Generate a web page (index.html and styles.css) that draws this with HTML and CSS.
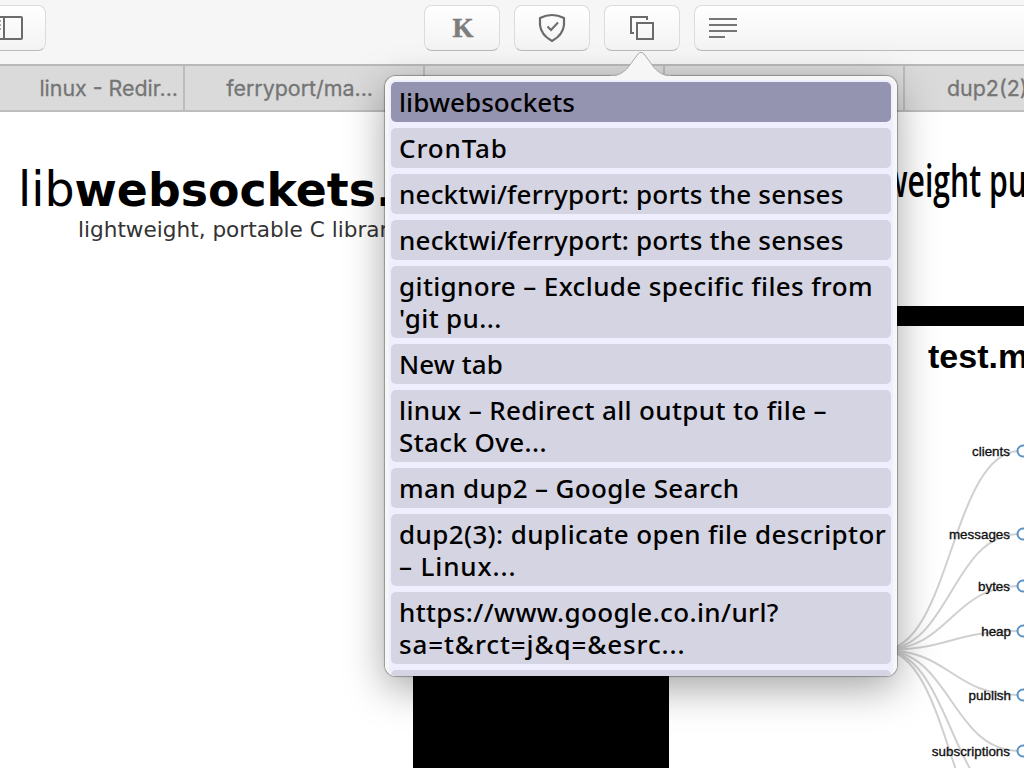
FILE: index.html
```
<!DOCTYPE html>
<html lang="en">
<head>
<meta charset="utf-8">
<title>libwebsockets</title>
<link rel="stylesheet" href="styles.css">
</head>
<body>
<div class="window">
  <header class="toolbar">
    <div class="button sidebar-button">
      <svg width="23" height="24" viewBox="0 0 23 24" fill="none" stroke="#6b6b6b" stroke-width="2"><path d="M-4 1H21Q22 1 22 2V22Q22 23 21 23H-4M4 1V23"/><path d="M0 5h1M0 9h1M0 13h1" stroke="#aaa"/></svg>
    </div>
    <div class="button k-button">K</div>
    <div class="button">
      <svg width="28" height="30" viewBox="0 0 28 30" fill="none" stroke="#6b6b6b" stroke-width="2.2"><path d="M14 2Q20 2 26 5V12Q25 22 14 28Q3 22 2 12V5Q8 2 14 2Z" stroke-linejoin="round"/><path d="M9.5 13.5L13 17L20 9.5" stroke-width="2"/></svg>
    </div>
    <div class="button">
      <svg width="24" height="24" viewBox="0 0 24 24" fill="none" stroke="#6b6b6b" stroke-width="2"><path d="M4 17H1V1H17V4"/><rect x="7" y="7" width="16" height="16"/></svg>
    </div>
    <div class="address">
      <svg width="28" height="20" viewBox="0 0 28 20" stroke="#757575" stroke-width="2"><path d="M0 1H28M0 7H28M0 13H28M0 19H16"/></svg>
    </div>
  </header>
  <nav class="tabs">
    <div class="tab tab-first">linux - Redir...</div>
    <div class="tab tab-second">ferryport/ma...</div>
    <div class="tab"></div>
    <div class="tab"></div>
    <div class="tab tab-last">dup2(2)</div>
  </nav>
  <main class="page">
    <section class="brand">
      <h1 class="logo"><span class="logo-light">lib</span><span class="logo-bold">websockets.</span></h1>
      <p class="tagline">lightweight, portable C library</p>
    </section>
    <div class="middle"><div class="video"></div></div>
    <section class="right">
      <h2 class="headline"><span>weight pu</span></h2>
      <div class="rule"></div>
      <h3 class="server">test.mosquitto</h3>
      <svg class="tree" width="144" height="383" viewBox="880 385 144 383">
        <g fill="none" stroke="#d0d0d0" stroke-width="2">
          <path d="M882 650C951 650 951 451 1020 451"/>
          <path d="M882 650C951 650 951 534 1020 534"/>
          <path d="M882 650C951 650 951 586 1020 586"/>
          <path d="M882 650C951 650 951 631 1020 631"/>
          <path d="M882 650C951 650 951 695 1020 695"/>
          <path d="M882 650C951 650 951 751 1020 751"/>
          <path d="M882 650C951 650 951 808 1020 808"/>
          <path d="M882 650C951 650 951 860 1020 860"/>
        </g>
        <g fill="#fff" stroke="#5b93c5" stroke-width="2">
          <circle cx="1023" cy="451" r="5.5"/><circle cx="1023" cy="534" r="5.5"/><circle cx="1023" cy="586" r="5.5"/><circle cx="1023" cy="631" r="5.5"/><circle cx="1023" cy="695" r="5.5"/><circle cx="1023" cy="751" r="5.5"/>
        </g>
        <g class="labels" text-anchor="end">
          <text x="1010" y="455.5">clients</text>
          <text x="1010" y="538.5">messages</text>
          <text x="1010" y="590.5">bytes</text>
          <text x="1011" y="636">heap</text>
          <text x="1011" y="700">publish</text>
          <text x="1010" y="756">subscriptions</text>
        </g>
      </svg>
    </section>
  </main>
  <div class="popover">
    <svg class="arrow" width="60" height="28" viewBox="0 0 60 28"><path d="M0 25C8 25 12 22 17 16.500L27 3Q30 -.2 33 3L43 16.500C48 22 52 25 60 25V28H0Z" fill="#f6f6f6"/><path d="M0 24.500C8 24.500 12 22 17 16.500L27 3Q30 -.5 33 3L43 16.500C48 22 52 24.500 60 24.500" fill="none" stroke="#aaa"/></svg>
    <div class="frame">
      <ul class="list">
        <li class="item selected tight">libwebsockets</li>
        <li class="item loose">CronTab</li>
        <li class="item snug">necktwi/ferryport: ports the senses</li>
        <li class="item snug">necktwi/ferryport: ports the senses</li>
        <li class="item">gitignore – Exclude specific files from<br>'git pu...</li>
        <li class="item tight">New tab</li>
        <li class="item">linux – Redirect all output to file –<br>Stack Ove...</li>
        <li class="item">man dup2 – Google Search</li>
        <li class="item">dup2(3): duplicate open file descriptor<br><span class="loose">– Linux...</span></li>
        <li class="item">https://www.google.co.in/url?<br><span class="loose">sa=t&amp;rct=j&amp;q=&amp;esrc...</span></li>
        <li class="item"></li>
      </ul>
    </div>
  </div>
</div>
</body>
</html>
```
FILE: styles.css
```
* { box-sizing: border-box; }
body { margin: 0; background: #fff; }
h1, h2, h3, p, ul { margin: 0; padding: 0; font-weight: normal; }
.window { position: relative; width: 1024px; height: 768px; overflow: hidden; display: flex; flex-direction: column; background: #fff; }

.toolbar { height: 64px; flex: none; display: flex; gap: 14px; padding-top: 5px; background: #f6f6f6; }
.button, .address { height: 46px; border: 1px solid #dcdcdc; border-bottom: 1.5px solid #bbb; border-radius: 8px; background: linear-gradient(#fff, #f3f3f3); display: flex; align-items: center; justify-content: center; }
.button { width: 76px; flex: none; }
.sidebar-button { width: 46px; margin-right: 364px; border-left: 0; border-radius: 0 8px 8px 0; justify-content: flex-start; }
.k-button { padding-left: 2px; font: bold 28px/44px "Liberation Serif", serif; color: #7d7d7d; -webkit-text-stroke: .5px #7d7d7d; }
.k-button { font-size: 27px; }
.address { flex: 1; border-right: 0; border-radius: 8px 0 0 8px; justify-content: flex-start; padding-left: 14px; }

.tabs { height: 48px; flex: none; display: flex; border-top: 2px solid #b9b9b9; border-bottom: 2px solid #bdbdbd; background: #dadada; font: 21.4px/44px Inter, sans-serif; color: #757575; -webkit-text-stroke: .3px #757575; overflow: hidden; white-space: nowrap; }
.tab { width: 240px; flex: none; border-right: 2px solid #bcbcbc; text-align: right; }
.tab-first { width: 185px; padding-right: 5px; }
.tab-second { padding-right: 50px; }
.tab-last { text-align: left; padding-left: 42px; border-right: 0; }

.page { flex: 1; min-height: 0; display: flex; overflow: hidden; }
.brand { width: 413px; flex: none; overflow: hidden; white-space: nowrap; padding: 50px 0 0 18px; }
.logo { display: flex; height: 56px; align-items: baseline; font: 47.5px/56px "DejaVu Sans", sans-serif; color: #000; }
.logo-bold { font-size: 45.8px; font-weight: bold; }
.tagline { padding-left: 60px; font: 21.6px/24px "DejaVu Sans", sans-serif; color: #333; }
.middle { width: 256px; flex: none; display: flex; flex-direction: column; justify-content: flex-end; }
.video { height: 120px; background: #000; }
.right { width: 355px; flex: none; display: flex; flex-direction: column; overflow: hidden; white-space: nowrap; }
.headline { height: 194px; padding: 39px 0 0 214px; font: 600 46px/56px "Open Sans", sans-serif; color: #000; }
.headline span { display: inline-block; transform: scaleX(.655); transform-origin: 0 0; }
.rule { height: 20px; flex: none; background: #000; }
.server { height: 59px; flex: none; padding: 12px 0 0 259px; font: bold 34px/36px "Liberation Sans", sans-serif; color: #000; }
.tree { flex: none; margin-left: 211px; }
.labels { font: 13.4px "Liberation Sans", sans-serif; fill: #111; stroke: #111; stroke-width: .35px; }

.popover { position: absolute; left: 385px; top: 76px; width: 512px; height: 600px; border-radius: 11px; box-shadow: 0 0 1px 1px rgba(0,0,0,.3), 0 12px 40px rgba(0,0,0,.36); }
.frame { height: 100%; padding: 4px 4px 0; border-radius: 11px; background: #f6f6f6; overflow: hidden; }
.arrow { position: absolute; left: 226px; top: -25px; }
.list { list-style: none; height: 100%; display: flex; flex-direction: column; gap: 6px; padding: 2px; background: #eef; border-radius: 6px 6px 0 0; overflow: hidden; }
.item { flex: none; min-height: 40px; padding: 4px 8px; border-radius: 5px; background: #d5d4e2; font: 500 26px/32px "Noto Sans", sans-serif; letter-spacing: .37px; color: #000; white-space: nowrap; }
.selected { background: #9594b0; }
.tight { letter-spacing: .08px; }
.snug { letter-spacing: .2px; }
.loose { letter-spacing: .88px; }
```
